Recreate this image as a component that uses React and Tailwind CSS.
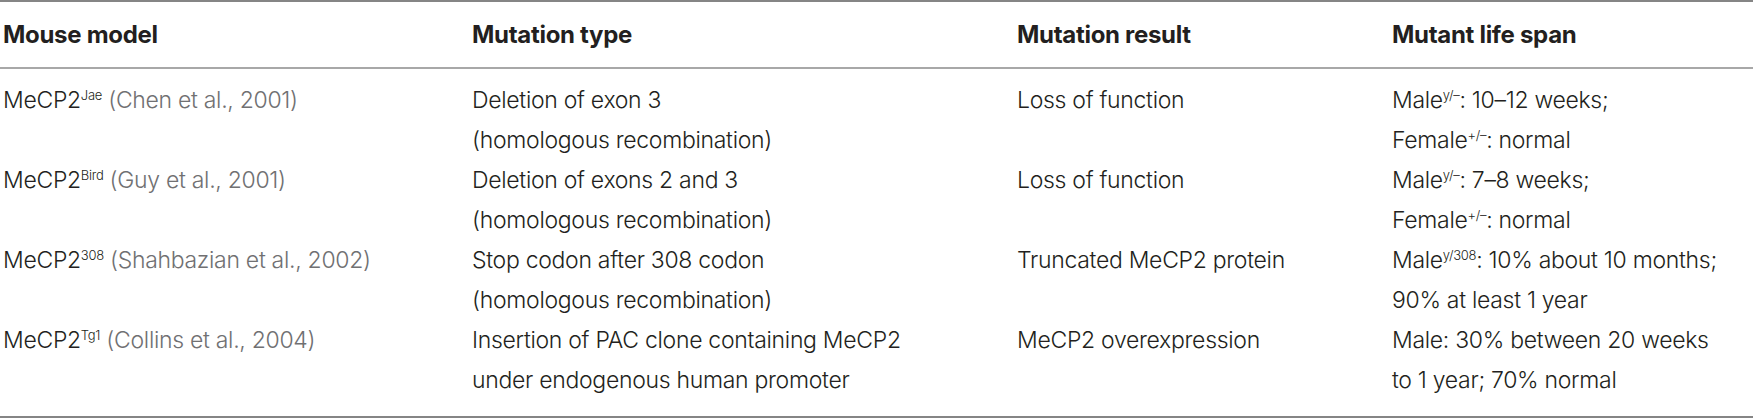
import React from "react";

const Sup = ({ children }) => (
  <sup className="text-[13px] -top-[8px] tracking-[-0.3px]">{children}</sup>
);

const rows = [
  {
    sup: "Jae",
    cite: "Chen et al., 2001",
    type: ["Deletion of exon 3", "(homologous recombination)"],
    result: "Loss of function",
    span: [
      <>Male<Sup>y/–</Sup>: 10–12 weeks;</>,
      <>Female<Sup>+/–</Sup>: normal</>,
    ],
  },
  {
    sup: "Bird",
    cite: "Guy et al., 2001",
    type: ["Deletion of exons 2 and 3", "(homologous recombination)"],
    result: "Loss of function",
    span: [
      <>Male<Sup>y/–</Sup>: 7–8 weeks;</>,
      <>Female<Sup>+/–</Sup>: normal</>,
    ],
  },
  {
    sup: "308",
    cite: "Shahbazian et al., 2002",
    type: ["Stop codon after 308 codon", "(homologous recombination)"],
    result: "Truncated MeCP2 protein",
    span: [<>Male<Sup>y/308</Sup>: 10% about 10 months;</>, <>90% at least 1 year</>],
  },
  {
    sup: "Tg1",
    cite: "Collins et al., 2004",
    type: ["Insertion of PAC clone containing MeCP2", "under endogenous human promoter"],
    result: "MeCP2 overexpression",
    span: [<>Male: 30% between 20 weeks</>, <>to 1 year; 70% normal</>],
  },
];

export default function App() {
  return (
    <div className="w-[1753px] h-[419px] bg-white font-['Inter',sans-serif] text-[#231f20]">
      <div className="border-t-2 border-b-2 border-[#858585] pb-[16px]">
        {/* header */}
        <div className="flex h-[67px] items-center border-b-2 border-[#a8a8a8] text-[24px] font-bold tracking-[-0.3px] pl-[3px]">
          <div className="w-[469px]">Mouse model</div>
          <div className="w-[545px]">Mutation type</div>
          <div className="w-[375px]">Mutation result</div>
          <div className="flex-1">Mutant life span</div>
        </div>

        <div className="pt-[11px] text-[23px] font-light leading-[40px] tracking-[-0.3px] pl-[3px]">
          {rows.map((r, i) => (
            <div key={i} className="flex">
              <div className="w-[469px]">
                MeCP2<Sup>{r.sup}</Sup>{" "}
                <span className="text-[#707072]">({r.cite})</span>
              </div>
              <div className="w-[545px]">
                {r.type.map((t, j) => (
                  <div key={j}>{t}</div>
                ))}
              </div>
              <div className="w-[375px]">{r.result}</div>
              <div className="flex-1">
                {r.span.map((t, j) => (
                  <div key={j}>{t}</div>
                ))}
              </div>
            </div>
          ))}
        </div>
      </div>
    </div>
  );
}
